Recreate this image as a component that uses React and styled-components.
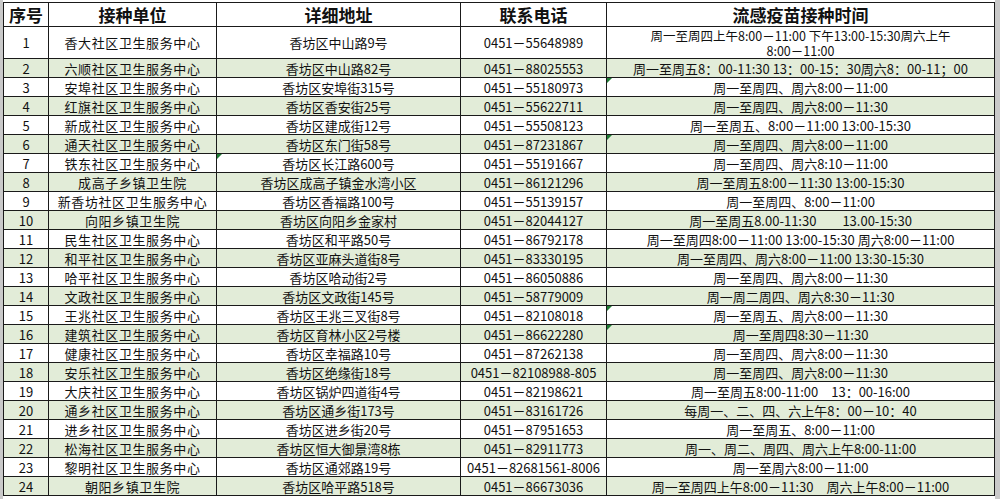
import styled, { createGlobalStyle, css } from "styled-components";

const GlobalStyle = createGlobalStyle`
  html, body {
    margin: 0;
    padding: 0;
    background: #ffffff;
  }
  body {
    font-family: "Noto Sans CJK SC", "Noto Sans", sans-serif;
    color: #111;
  }
`;

const Page = styled.div`
  display: flex;
  width: 1000px;
  height: 499px;
  overflow: hidden;
  background: #fff;
`;

const Gutter = styled.div`
  width: ${(p) => p.$w || "3px"};
  flex: ${(p) => (p.$grow ? 1 : "none")};
  background: #c9c9c9;
`;

const Sheet = styled.table`
  width: 991px;
  margin-top: 2px;
  align-self: flex-start;
  border-collapse: collapse;
  table-layout: fixed;
`;

const HeadRow = styled.tr`
  height: 24px;
  background: #fff;
`;

const HeadCell = styled.th`
  border: 1px solid #1a1a1a;
  padding: 0;
  font-size: 17px;
  font-weight: 700;
  line-height: 22px;
  text-align: center;
  white-space: nowrap;
  color: #111;
`;

const Row = styled.tr`
  height: ${(p) => (p.$tall ? "32px" : "19px")};
  background: ${(p) => (p.$shade ? "#e2ecd8" : "#ffffff")};
`;

const Cell = styled.td`
  position: relative;
  border: 1px solid #1a1a1a;
  padding: 0 2px;
  font-size: 13px;
  line-height: 15px;
  text-align: center;
  white-space: nowrap;
  overflow: hidden;
  letter-spacing: ${(p) => (p.$spread ? "0.6px" : "0")};
  ${(p) =>
    p.$mark &&
    css`
      &::before {
        content: "";
        position: absolute;
        top: 0;
        left: 0;
        border-top: 5px solid #1e7b34;
        border-right: 5px solid transparent;
      }
    `}
`;

const Line = styled.div`
  height: 15px;
  line-height: 15px;
  font-size: 12.5px;
  overflow: visible;
`;

const columns = [
  { title: "序号", width: 45 },
  { title: "接种单位", width: 168 },
  { title: "详细地址", width: 244 },
  { title: "联系电话", width: 146 },
  { title: "流感疫苗接种时间", width: 388 },
];

const rows = [
  ["香大社区卫生服务中心", "香坊区中山路9号", "0451－55648989", "周一至周四上午8:00－11:00 下午13:00-15:30周六上午\n8:00－11:00"],
  ["六顺社区卫生服务中心", "香坊区中山路82号", "0451－88025553", "周一至周五8：00-11:30 13：00-15：30周六8：00-11；00"],
  ["安埠社区卫生服务中心", "香坊区安埠街315号", "0451－55180973", "周一至周四、周六8:00－11:00"],
  ["红旗社区卫生服务中心", "香坊区香安街25号", "0451－55622711", "周一至周四、周六8:00－11:30"],
  ["新成社区卫生服务中心", "香坊区建成街12号", "0451－55508123", "周一至周五、8:00－11:00 13:00-15:30"],
  ["通天社区卫生服务中心", "香坊区东门街58号", "0451－87231867", "周一至周四、周六8:00－11:00"],
  ["铁东社区卫生服务中心", "香坊区长江路600号", "0451－55191667", "周一至周四、周六8:10－11:00"],
  ["成高子乡镇卫生院", "香坊区成高子镇金水湾小区", "0451－86121296", "周一至周五8:00－11:30 13:00-15:30"],
  ["新香坊社区卫生服务中心", "香坊区香福路100号", "0451－55139157", "周一至周四、8:00－11:00"],
  ["向阳乡镇卫生院", "香坊区向阳乡金家村", "0451－82044127", "周一至周五8.00-11:30\u3000\u300013.00-15:30"],
  ["民生社区卫生服务中心", "香坊区和平路50号", "0451－86792178", "周一至周四8:00－11:00 13:00-15:30 周六8:00－11:00"],
  ["和平社区卫生服务中心", "香坊区亚麻头道街8号", "0451－83330195", "周一至周四、周六8:00－11:00 13:30-15:30"],
  ["哈平社区卫生服务中心", "香坊区哈动街2号", "0451－86050886", "周一至周四、周六8:00－11:30"],
  ["文政社区卫生服务中心", "香坊区文政街145号", "0451－58779009", "周一周二周四、周六8:30－11:30"],
  ["王兆社区卫生服务中心", "香坊区王兆三叉街8号", "0451－82108018", "周一至周五、周六8:00－11:30"],
  ["建筑社区卫生服务中心", "香坊区育林小区2号楼", "0451－86622280", "周一至周四8:30－11:30"],
  ["健康社区卫生服务中心", "香坊区幸福路10号", "0451－87262138", "周一至周四、周六8:00－11:30"],
  ["安乐社区卫生服务中心", "香坊区绝缘街18号", "0451－82108988-805", "周一至周四、周六8:00－11:30"],
  ["大庆社区卫生服务中心", "香坊区锅炉四道街4号", "0451－82198621", "周一至周五8:00-11:00\u300013：00-16:00"],
  ["通乡社区卫生服务中心", "香坊区通乡街173号", "0451－83161726", "每周一、二、四、六上午8：00－10：40"],
  ["进乡社区卫生服务中心", "香坊区进乡街20号", "0451－87951653", "周一至周五、8:00－11:00"],
  ["松海社区卫生服务中心", "香坊区恒大御景湾8栋", "0451－82911773", "周一、周二、周四、周六上午8:00-11:00"],
  ["黎明社区卫生服务中心", "香坊区通郊路19号", "0451－82681561-8006", "周一至周六8:00－11:00"],
  ["朝阳乡镇卫生院", "香坊区哈平路518号", "0451－86673036", "周一至周四上午8:00－11:30\u3000周六上午8:00－11:00"],
];

// little green corner flags, keyed "row-col" (1-based row, 0-based col)
const marks = new Set(["3-4", "6-4", "7-2", "15-4", "16-4"]);

const renderText = (text) => {
  const lines = text.split("\n");
  if (lines.length === 1) return text;
  return lines.map((line, i) => <Line key={i}>{line}</Line>);
};

export default function App() {
  return (
    <>
      <GlobalStyle />
      <Page>
        <Gutter />
        <Sheet>
          <colgroup>
            {columns.map((c) => (
              <col key={c.title} style={{ width: c.width }} />
            ))}
          </colgroup>
          <thead>
            <HeadRow>
              {columns.map((c) => (
                <HeadCell key={c.title}>{c.title}</HeadCell>
              ))}
            </HeadRow>
          </thead>
          <tbody>
            {rows.map((r, i) => {
              const n = i + 1;
              return (
                <Row key={n} $tall={n === 1} $shade={n % 2 === 0}>
                  <Cell>{n}</Cell>
                  {r.map((v, j) => (
                    <Cell key={j} $mark={marks.has(`${n}-${j + 1}`)} $spread={j === 0}>
                      {renderText(v)}
                    </Cell>
                  ))}
                </Row>
              );
            })}
          </tbody>
        </Sheet>
        <Gutter $grow />
      </Page>
    </>
  );
}
